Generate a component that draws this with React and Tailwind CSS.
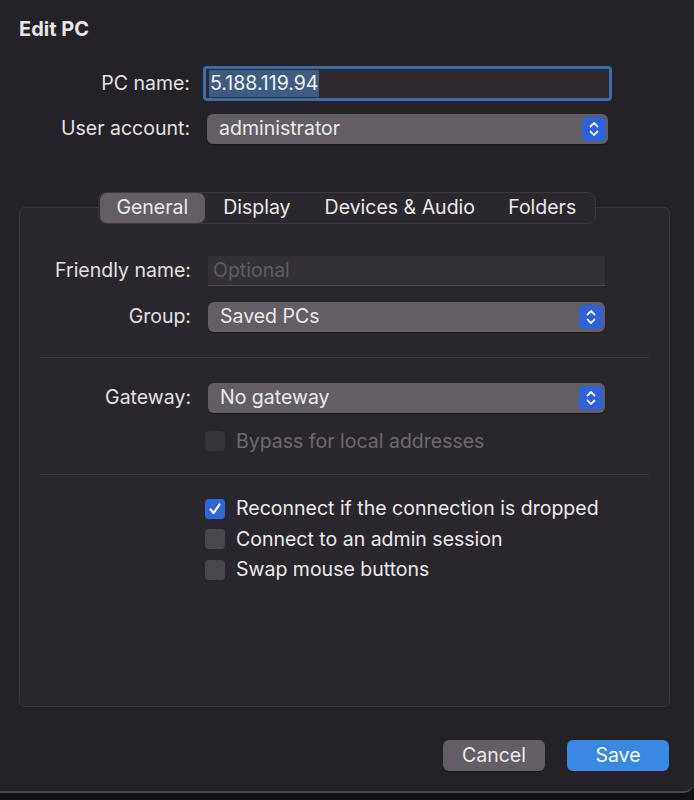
import React, { useState } from 'react';

const font = { fontFamily: 'Inter, "Liberation Sans", sans-serif' };

// Blue up/down stepper on the right of popup buttons
function Stepper() {
  return (
    <div className="w-[24px] h-[24px] rounded-[5px] bg-[#2f62d8] flex items-center justify-center">
      <svg width="12" height="18" viewBox="0 0 12 18" fill="none" stroke="#e8eefc" strokeWidth="1.8" strokeLinecap="round" strokeLinejoin="round">
        <path d="M2.5 6.5 L6 3 L9.5 6.5" />
        <path d="M2.5 11.5 L6 15 L9.5 11.5" />
      </svg>
    </div>
  );
}

function Popup({ value, width = 'w-[401px]' }) {
  return (
    <div className={`${width} h-[30px] rounded-[6px] bg-[#625e64] flex items-center justify-between pl-[12px] pr-[2px] shadow-[0_1px_1px_rgba(0,0,0,0.35)]`}>
      <span className="text-[19.5px] text-[#ece9ee]">{value}</span>
      <Stepper />
    </div>
  );
}

function Checkbox({ checked, disabled, label }) {
  return (
    <div className="flex items-center gap-[11px] h-[30.5px]">
      {checked ? (
        <div className="w-[20px] h-[20px] rounded-[4px] bg-[#2f66de] flex items-center justify-center">
          <svg width="14" height="14" viewBox="0 0 14 14" fill="none" stroke="#fff" strokeWidth="2.2" strokeLinecap="round" strokeLinejoin="round">
            <path d="M2.5 7.5 L5.5 11 L11.5 2.5" />
          </svg>
        </div>
      ) : (
        <div className={`w-[20px] h-[20px] rounded-[4px] ${disabled ? 'bg-[#38353a]' : 'bg-[#4a474c]'}`} />
      )}
      <span className={`text-[19.5px] ${disabled ? 'text-[#6c696e]' : 'text-[#ece9ee]'}`}>{label}</span>
    </div>
  );
}

function Row({ label, children, labelWidth = 'w-[190px]' }) {
  return (
    <div className="flex items-center">
      <div className={`${labelWidth} shrink-0 text-right text-[19.5px] text-[#e3e0e5] pr-[17px]`}>{label}</div>
      {children}
    </div>
  );
}

export default function App() {
  const [tab, setTab] = useState('General');
  const tabs = ['General', 'Display', 'Devices & Audio', 'Folders'];

  return (
    <div className="w-[694px] h-[800px] bg-[#121013] flex flex-col" style={font}>
      <div className="h-[793px] bg-[#252227] border-b-[2px] border-[#4a474c] rounded-br-[10px] flex flex-col">
        <h1 className="text-[20px] font-bold text-[#e9e6eb] pl-[19px] pt-[17px] leading-[24px]">Edit PC</h1>

        {/* Top fields */}
        <div className="flex flex-col gap-[13px] mt-[25px] pl-[2px]">
          <Row label="PC name:" labelWidth="w-[205px]">
            <div className="ml-[-4px] w-[409px] h-[35px] rounded-[4px] border-[3px] border-[#3d6ba3] bg-[#2d272f] flex items-center pl-[3px]">
              <span className="text-[19.5px] text-[#f2f2f5] bg-[#3f5b84] px-[1px] leading-[27px]">5.188.119.94</span>
            </div>
          </Row>
          <Row label="User account:" labelWidth="w-[205px]">
            <Popup value="administrator" />
          </Row>
        </div>

        {/* Group box with tabs */}
        <div className="relative mt-[63px] ml-[19px] w-[651px] h-[500px] border border-[#3b383d] rounded-[6px] bg-[#2a272c]">
          <div className="absolute left-[78px] top-[-16px] flex items-center h-[32px] w-[498px] bg-[#2b282d] border border-[#3c393e] rounded-[8px] px-[1px]">
            {tabs.map((t) => (
              <button
                key={t}
                onClick={() => setTab(t)}
                className={`h-[30px] rounded-[7px] text-[19.5px] text-[#ece9ee] ${t === tab ? 'bg-[#625e64]' : ''} ${
                  t === 'General' ? 'w-[105px]' : t === 'Display' ? 'w-[105px]' : t === 'Devices & Audio' ? 'w-[182px]' : 'w-[104px]'
                }`}
              >
                {t}
              </button>
            ))}
          </div>

          <div className="pt-[48px] flex flex-col">
            <div className="flex flex-col gap-[16px]">
              <Row label="Friendly name:" labelWidth="w-[188px]">
                <div className="w-[397px] h-[30px] bg-[#333036] border-b border-[#4d4a4f] flex items-center pl-[5px]">
                  <span className="text-[19.5px] text-[#5f5c61]">Optional</span>
                </div>
              </Row>
              <Row label="Group:" labelWidth="w-[188px]">
                <Popup value="Saved PCs" width="w-[397px]" />
              </Row>
            </div>

            <div className="ml-[20px] mr-[20px] mt-[25px] border-t border-[#3d3a3f]" />

            <div className="mt-[25px]">
              <Row label="Gateway:" labelWidth="w-[188px]">
                <Popup value="No gateway" width="w-[397px]" />
              </Row>
            </div>
            <div className="pl-[185px] mt-[13px]">
              <Checkbox disabled label="Bypass for local addresses" />
            </div>

            <div className="ml-[20px] mr-[20px] mt-[17px] border-t border-[#3d3a3f]" />

            <div className="pl-[185px] mt-[19px] flex flex-col">
              <Checkbox checked label="Reconnect if the connection is dropped" />
              <Checkbox label="Connect to an admin session" />
              <Checkbox label="Swap mouse buttons" />
            </div>
          </div>
        </div>

        {/* Buttons */}
        <div className="flex justify-end gap-[22px] mt-[33px] pr-[25px]">
          <button className="w-[102px] h-[31px] rounded-[6px] bg-[#625e64] text-[19.5px] text-[#ece9ee] shadow-[0_1px_1px_rgba(0,0,0,0.35)]">Cancel</button>
          <button className="w-[102px] h-[31px] rounded-[6px] bg-[#3a88e4] text-[19.5px] text-white">Save</button>
        </div>
      </div>
    </div>
  );
}
